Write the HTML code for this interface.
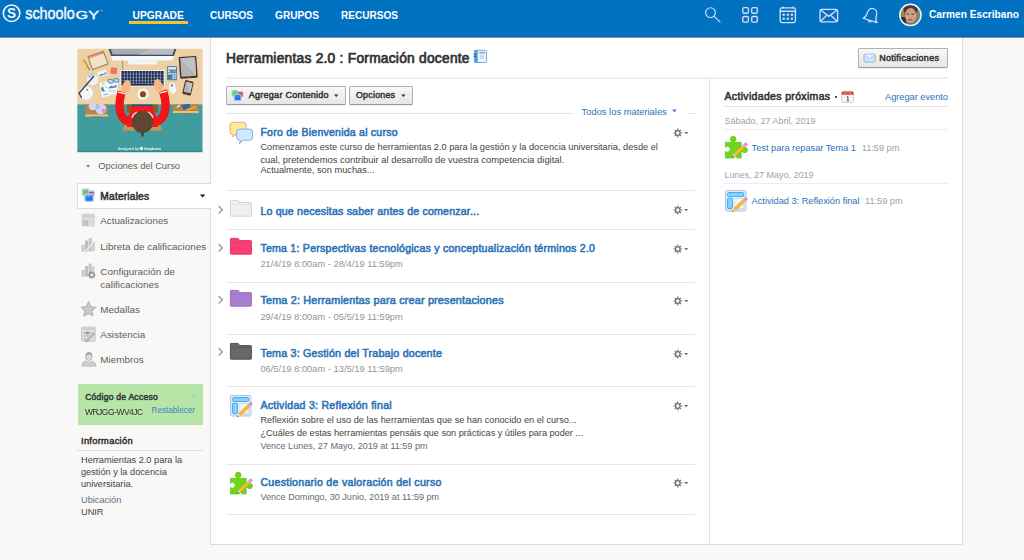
<!DOCTYPE html>
<html lang="es">
<head>
<meta charset="utf-8">
<title>Herramientas 2.0 : Formación docente | Schoology</title>
<style>
*{box-sizing:border-box;margin:0;padding:0}
html,body{width:1024px;height:560px;overflow:hidden}
body{background:#f9f8f6;font-family:"Liberation Sans",sans-serif;color:#333;position:relative;font-size:9px}
.abs{position:absolute}
.t{position:absolute;white-space:nowrap;line-height:1}
svg{position:absolute;overflow:visible}

</style>
</head>
<body>
<div class="abs" style="left:0px;top:0px;width:1024px;height:37px;background:linear-gradient(#0172c2 0,#0172c2 34.5px,#0968b7 35px,#0968b7 37px);box-shadow:0 0 1px 0 rgba(40,40,60,.8)"></div>
<div class="t" style="left:132.6px;top:11px;font-size:10.24px;font-weight:bold;color:#fff;">UPGRADE</div>
<div class="abs" style="left:129px;top:21px;width:58.5px;height:2.5px;background:#f6c32b;"></div>
<div class="t" style="left:210.0px;top:11px;font-size:10.05px;font-weight:bold;color:#fff;">CURSOS</div>
<div class="t" style="left:275.0px;top:11px;font-size:10.15px;font-weight:bold;color:#fff;">GRUPOS</div>
<div class="t" style="left:341.0px;top:11px;font-size:10.06px;font-weight:bold;color:#fff;">RECURSOS</div>
<div class="t" style="left:929.0px;top:10px;font-size:10.18px;font-weight:bold;color:#fff;">Carmen Escribano</div>
<svg style="left:0;top:0" width="110" height="37" viewBox="0 0 110 37">
<circle cx="11.55" cy="13.2" r="8.25" fill="none" stroke="#f2f5fc" stroke-width="1.6"/>
<text x="7.1" y="18.2" font-family="Liberation Sans" font-weight="bold" font-size="14" fill="#f2f5fc" textLength="9" lengthAdjust="spacingAndGlyphs">S</text>
<text x="25.2" y="18.6" font-family="Liberation Sans" font-size="16.6" fill="#f4f6fc" stroke="#f4f6fc" stroke-width="0.45" textLength="49.6" lengthAdjust="spacingAndGlyphs">schoolo</text>
<text x="75.6" y="18.6" font-family="Liberation Sans" font-size="11.8" fill="#f4f6fc" stroke="#f4f6fc" stroke-width="0.4" textLength="23.4" lengthAdjust="spacingAndGlyphs">GY</text>
<text x="100" y="11.5" font-family="Liberation Sans" font-size="3" fill="#dfe8f8">™</text>
</svg>
<svg style="left:700px;top:0" width="240" height="37" viewBox="700 0 240 37" fill="none" stroke="#d6dcf4" stroke-width="1.35" stroke-linecap="round" stroke-linejoin="round">
<g stroke-width="1.15"><circle cx="710.5" cy="12.6" r="4.9"/><path d="M714.2 16.3L720 21.8"/></g>
<rect x="742.8" y="7.6" width="5.6" height="5.6" rx="1.3"/><rect x="751.7" y="7.6" width="5.6" height="5.6" rx="1.3"/>
<rect x="742.8" y="16.5" width="5.6" height="5.6" rx="1.3"/><rect x="751.7" y="16.5" width="5.6" height="5.6" rx="1.3"/>
<rect x="780.2" y="7.8" width="15.2" height="14.8" rx="1.8"/><path d="M780.2 11.2H795.4"/>
<g stroke="none" fill="#d6dcf4"><circle cx="783.2" cy="7.6" r="1"/><circle cx="792.6" cy="7.6" r="1"/>
<rect x="782.6" y="13.6" width="2.2" height="2.2"/><rect x="786.7" y="13.6" width="2.2" height="2.2"/><rect x="790.8" y="13.6" width="2.2" height="2.2"/>
<rect x="782.6" y="17.6" width="2.2" height="2.2"/><rect x="786.7" y="17.6" width="2.2" height="2.2"/><rect x="790.8" y="17.6" width="2.2" height="2.2"/></g>
<rect x="820" y="9.4" width="17.6" height="12.4" rx="1.6"/><path d="M820.6 10L828.8 16.4L837 10M820.6 21.2L827 15M837 21.2L830.6 15"/>
<g transform="translate(1.4 0.8) rotate(17 870 15)" stroke-width="1.2"><path d="M862.6 19.8C865.3 18.6 865 16.5 865.2 13.5C865.4 9.8 867.4 7.6 870 7.6C872.6 7.6 874.6 9.8 874.8 13.5C875 16.5 874.7 18.6 877.4 19.8Z"/><path d="M868.4 20.2a1.7 1.7 0 0 0 3.2 0"/></g>
</svg>
<svg style="left:896px;top:0" width="30" height="32" viewBox="896 0 30 32">
<defs><clipPath id="av"><circle cx="910.4" cy="14.95" r="10.2"/></clipPath><filter id="bl"><feGaussianBlur stdDeviation="0.6"/></filter></defs>
<g clip-path="url(#av)"><g filter="url(#bl)">
<rect x="896" y="0" width="30" height="32" fill="#7f7a55"/>
<rect x="915" y="0" width="12" height="32" fill="#7c8470"/>
<rect x="899" y="3" width="5" height="14" fill="#9a8a3c"/>
<rect x="899" y="17" width="7" height="10" fill="#2f3440"/>
<ellipse cx="910.5" cy="9.5" rx="7" ry="5.5" fill="#4a3731"/>
<ellipse cx="910.6" cy="15.5" rx="5.6" ry="7.4" fill="#cfa08a"/>
<ellipse cx="910.3" cy="19.7" rx="2.4" ry="1" fill="#c0584a"/>
<rect x="906.5" y="13.6" width="2.6" height="1.2" fill="#6a4a40"/><rect x="911.5" y="13.6" width="2.6" height="1.2" fill="#6a4a40"/>
<path d="M900 27Q910 20 921 27Z" fill="#4a6a72"/>
</g></g>
<circle cx="910.4" cy="14.95" r="10.6" fill="none" stroke="#f4f6fb" stroke-width="1.5"/>
</svg>
<div class="abs" style="left:210px;top:37px;width:753px;height:508px;background:#fff;border:1px solid #dcdcdc;border-top:none"></div>
<div class="abs" style="left:0px;top:37px;width:1024px;height:1px;background:rgba(95,115,145,.75);"></div>
<div class="abs" style="left:77px;top:183px;width:134px;height:26px;background:#fff;border:1px solid #dcdcdc;border-right:none"></div>
<div class="t" style="left:226.0px;top:52px;font-size:13.76px;color:#333;letter-spacing:0.254px;-webkit-text-stroke:0.72px #333;">Herramientas 2.0 : Formación docente</div>
<div class="abs" style="left:226px;top:76.8px;width:722px;height:2px;background:#efefef;"></div>
<div class="abs" style="left:226px;top:85.5px;width:120px;height:19.5px;background:linear-gradient(#f8f8f8,#e6e6e6);border:1px solid #b0b0b0;border-bottom-color:#9a9a9a;border-radius:1.5px;box-shadow:0 .5px .5px rgba(0,0,0,.12)"></div>
<div class="abs" style="left:349px;top:85.5px;width:64px;height:19.5px;background:linear-gradient(#f8f8f8,#e6e6e6);border:1px solid #b0b0b0;border-bottom-color:#9a9a9a;border-radius:1.5px;box-shadow:0 .5px .5px rgba(0,0,0,.12)"></div>
<div class="abs" style="left:858px;top:48.2px;width:90px;height:19.5px;background:linear-gradient(#f8f8f8,#e6e6e6);border:1px solid #b0b0b0;border-bottom-color:#9a9a9a;border-radius:1.5px;box-shadow:0 .5px .5px rgba(0,0,0,.12)"></div>
<div class="t" style="left:248.8px;top:91px;font-size:9.05px;color:#333;letter-spacing:0.235px;-webkit-text-stroke:0.47px #333;">Agregar Contenido</div>
<div class="t" style="left:356.0px;top:91px;font-size:8.84px;color:#333;letter-spacing:0.244px;-webkit-text-stroke:0.46px #333;">Opciones</div>
<div class="t" style="left:879.2px;top:54px;font-size:9.00px;color:#333;letter-spacing:0.285px;-webkit-text-stroke:0.47px #333;">Notificaciones</div>
<svg style="left:472px;top:48px" width="18" height="18" viewBox="472 48 18 18"><g filter="url(#b3)">
<rect x="474.4" y="50.3" width="12.2" height="12.2" rx=".8" fill="#d9ecff" stroke="#6ea8e6" stroke-width=".9"/>
<rect x="474.4" y="50.3" width="3.2" height="12.2" fill="#4d93e2"/>
<rect x="478.6" y="51.6" width="7" height="9.8" fill="#f2f8ff"/>
<rect x="479.2" y="52.2" width="5.8" height="1.3" fill="#5aa0ea"/>
<rect x="479.9" y="54.8" width="4.2" height="4.2" fill="#d8d8d8"/>
<path d="M473.6 54.2h2.2M473.6 56.4h2.2" stroke="#3a4a66" stroke-width=".8"/>
<path d="M473.6 52.2h2M473.6 58.6h2M473.6 60.6h2" stroke="#8fbdf0" stroke-width=".7"/>
</g></svg>
<svg style="left:230px;top:88px" width="16" height="16" viewBox="230 88 16 16"><g filter="url(#b3)">
<rect x="232" y="90.4" width="5.8" height="5.6" rx="1" fill="url(#gG)" stroke="#a9c7ee" stroke-width="1"/>
<rect x="237.6" y="91.8" width="5.4" height="5.2" rx="1" fill="url(#gR)" stroke="#a9c7ee" stroke-width="1"/>
<rect x="234.2" y="94.4" width="6.8" height="6.2" rx="1.2" fill="url(#gB)" stroke="#a9c7ee" stroke-width="1.1"/>
</g></svg>
<svg style="left:332px;top:92px" width="80" height="8" viewBox="332 92 80 8"><path d="M334 94.5h4.4l-2.2 2.6Z M401.2 94.5h4.4l-2.2 2.6Z" fill="#333"/></svg>
<svg style="left:862px;top:52px" width="16" height="12" viewBox="862 52 16 12"><g filter="url(#b3)">
<rect x="864" y="54.2" width="11.2" height="7.8" rx=".8" fill="#d9e9fb" stroke="#86aee6" stroke-width=".9"/>
<path d="M864.4 54.8L869.6 59L874.8 54.8" fill="#eef5fe" stroke="#9dbdec" stroke-width=".8"/>
<path d="M864.4 61.6L868.2 58M874.8 61.6L871 58" stroke="#b4cdf0" stroke-width=".6"/>
</g></svg>
<svg style="left:839px;top:89px" width="18" height="16" viewBox="839 89 18 16"><g filter="url(#b3)">
<rect x="841.8" y="92" width="11.6" height="10.4" rx="1" fill="#fafafa" stroke="#c4c8cc" stroke-width=".9"/>
<path d="M841.6 92.6Q841.6 91.4 842.8 91.4H852.4Q853.6 91.4 853.6 92.6V94.8H841.6Z" fill="#f1482a"/>
<rect x="844.2" y="90.6" width="1.7" height="3" rx=".5" fill="#8fa4b8"/><rect x="849.3" y="90.6" width="1.7" height="3" rx=".5" fill="#8fa4b8"/>
<path d="M846.8 97.2L847.9 96.4V100.6M846.9 100.7H849" stroke="#444" stroke-width=".9" fill="none"/>
<path d="M844.6 95.4V102M850.8 95.4V102" stroke="#e6e6e6" stroke-width=".5"/>
</g></svg>
<div class="abs" style="left:226px;top:113px;width:347px;height:1px;background:#e3e3e3;"></div>
<div class="abs" style="left:687px;top:113px;width:8px;height:1px;background:#e3e3e3;"></div>
<div class="t" style="left:581.6px;top:108px;font-size:9.35px;color:#2b73b7;">Todos los materiales</div>
<div class="abs" style="left:226px;top:190px;width:469px;height:1px;background:#e6e6e6;"></div>
<div class="abs" style="left:226px;top:229px;width:469px;height:1px;background:#e6e6e6;"></div>
<div class="abs" style="left:226px;top:282px;width:469px;height:1px;background:#e6e6e6;"></div>
<div class="abs" style="left:226px;top:334px;width:469px;height:1px;background:#e6e6e6;"></div>
<div class="abs" style="left:226px;top:386px;width:469px;height:1px;background:#e6e6e6;"></div>
<div class="abs" style="left:226px;top:464px;width:469px;height:1px;background:#e6e6e6;"></div>
<div class="abs" style="left:226px;top:514px;width:469px;height:1px;background:#e6e6e6;"></div>
<div class="abs" style="left:709px;top:78px;width:1px;height:467px;background:#e3e3e3;"></div>
<div class="t" style="left:260.4px;top:127px;font-size:10.52px;color:#2b73b7;letter-spacing:0.239px;-webkit-text-stroke:0.55px #2b73b7;">Foro de Bienvenida al curso</div>
<div class="t" style="left:260.4px;top:143px;font-size:9.21px;color:#444;">Comenzamos este curso de herramientas 2.0 para la gestión y la docencia universitaria, desde el</div>
<div class="t" style="left:260.4px;top:155px;font-size:9.39px;color:#444;">cual, pretendemos contribuir al desarrollo de vuestra competencia digital.</div>
<div class="t" style="left:260.4px;top:166px;font-size:9.25px;color:#444;">Actualmente, son muchas...</div>
<div class="t" style="left:260.4px;top:206px;font-size:10.63px;color:#2b73b7;letter-spacing:0.174px;-webkit-text-stroke:0.55px #2b73b7;">Lo que necesitas saber antes de comenzar...</div>
<div class="t" style="left:260.4px;top:243px;font-size:10.57px;color:#2b73b7;letter-spacing:0.243px;-webkit-text-stroke:0.55px #2b73b7;">Tema 1: Perspectivas tecnológicas y conceptualización términos 2.0</div>
<div class="t" style="left:260.4px;top:260px;font-size:9.33px;color:#959595;">21/4/19 8:00am - 28/4/19 11:59pm</div>
<div class="t" style="left:260.4px;top:295px;font-size:10.81px;color:#2b73b7;letter-spacing:0.190px;-webkit-text-stroke:0.56px #2b73b7;">Tema 2: Herramientas para crear presentaciones</div>
<div class="t" style="left:260.4px;top:313px;font-size:9.33px;color:#959595;">29/4/19 8:00am - 05/5/19 11:59pm</div>
<div class="t" style="left:260.4px;top:348px;font-size:10.73px;color:#2b73b7;letter-spacing:0.186px;-webkit-text-stroke:0.56px #2b73b7;">Tema 3: Gestión del Trabajo docente</div>
<div class="t" style="left:260.4px;top:365px;font-size:9.33px;color:#959595;">06/5/19 8:00am - 13/5/19 11:59pm</div>
<div class="t" style="left:260.4px;top:400px;font-size:10.55px;color:#2b73b7;letter-spacing:0.279px;-webkit-text-stroke:0.55px #2b73b7;">Actividad 3: Reflexión final</div>
<div class="t" style="left:260.4px;top:416px;font-size:9.19px;color:#444;">Reflexión sobre el uso de las herramientas que se han conocido en el curso...</div>
<div class="t" style="left:260.4px;top:429px;font-size:9.14px;color:#444;">¿Cuáles de estas herramientas pensáis que son prácticas y útiles para poder ...</div>
<div class="t" style="left:260.4px;top:442px;font-size:9.07px;color:#5f6b7a;">Vence Lunes, 27 Mayo, 2019 at 11:59 pm</div>
<div class="t" style="left:260.4px;top:477px;font-size:10.58px;color:#2b73b7;letter-spacing:0.281px;-webkit-text-stroke:0.55px #2b73b7;">Cuestionario de valoración del curso</div>
<div class="t" style="left:260.4px;top:493px;font-size:9.10px;color:#5f6b7a;">Vence Domingo, 30 Junio, 2019 at 11:59 pm</div>
<svg style="left:226px;top:118px" width="32" height="30" viewBox="226 118 32 30"><g filter="url(#b3)">
<path d="M233 122.3H243.2Q246.2 122.3 246.2 125.3V131.8Q246.2 134.8 243.2 134.8H236L232.6 137L233.6 134.8H233Q230 134.8 230 131.8V125.3Q230 122.3 233 122.3Z" fill="#fde8a0" stroke="#f7a479" stroke-width="1"/>
<path d="M239.6 129.1H249.6Q252.6 129.1 252.6 132.1V137.2Q252.6 140.2 249.6 140.2H243.4L239.2 143.8L240.6 140.2H239.6Q236.6 140.2 236.6 137.2V132.1Q236.6 129.1 239.6 129.1Z" fill="#cfeaff" stroke="#7db1ea" stroke-width="1"/>
</g></svg>
<svg style="left:228px;top:198px" width="26" height="22" viewBox="228 198 26 22"><g filter="url(#b3)">
<path d="M230.4 201Q230.4 200.4 231 200.4H237.8Q238.4 200.4 238.7 201L239.5 202.6H250.8Q251.4 202.6 251.4 203.2V215.6Q251.4 216.2 250.8 216.2H231Q230.4 216.2 230.4 215.6Z" fill="#f0f0f0" stroke="#cfcfcf" stroke-width=".9"/>
<path d="M230.8 204.6H251" stroke="#dedede" stroke-width=".8"/></g></svg>
<svg style="left:216px;top:203.7px" width="10" height="12" viewBox="216 203.7 10 12"><path d="M218.6 205.7L222.4 209.5L218.6 213.29999999999998" fill="none" stroke="#959595" stroke-width="1.3"/></svg>
<svg style="left:228px;top:236px" width="26" height="22" viewBox="228 236 26 22"><g filter="url(#b3)">
<path d="M230.4 239Q230.4 238.4 231 238.4H237.8Q238.4 238.4 238.7 239L239.5 240.6H250.8Q251.4 240.6 251.4 241.2V253.6Q251.4 254.2 250.8 254.2H231Q230.4 254.2 230.4 253.6Z" fill="#fb3c75" stroke="#e02e62" stroke-width=".9"/>
<path d="M230.8 242.6H251" stroke="#e93769" stroke-width=".8"/></g></svg>
<svg style="left:216px;top:241.5px" width="10" height="12" viewBox="216 241.5 10 12"><path d="M218.6 243.5L222.4 247.3L218.6 251.1" fill="none" stroke="#959595" stroke-width="1.3"/></svg>
<svg style="left:228px;top:288px" width="26" height="22" viewBox="228 288 26 22"><g filter="url(#b3)">
<path d="M230.4 291Q230.4 290.4 231 290.4H237.8Q238.4 290.4 238.7 291L239.5 292.6H250.8Q251.4 292.6 251.4 293.2V305.6Q251.4 306.2 250.8 306.2H231Q230.4 306.2 230.4 305.6Z" fill="#aa80cd" stroke="#9566be" stroke-width=".9"/>
<path d="M230.8 294.6H251" stroke="#9c6fc4" stroke-width=".8"/></g></svg>
<svg style="left:216px;top:294px" width="10" height="12" viewBox="216 294 10 12"><path d="M218.6 296L222.4 299.8L218.6 303.6" fill="none" stroke="#959595" stroke-width="1.3"/></svg>
<svg style="left:228px;top:340.6px" width="26" height="22" viewBox="228 340.6 26 22"><g filter="url(#b3)">
<path d="M230.4 343.6Q230.4 343.0 231 343.0H237.8Q238.4 343.0 238.7 343.6L239.5 345.20000000000005H250.8Q251.4 345.20000000000005 251.4 345.8V358.20000000000005Q251.4 358.8 250.8 358.8H231Q230.4 358.8 230.4 358.20000000000005Z" fill="#676767" stroke="#484848" stroke-width=".9"/>
<path d="M230.8 347.20000000000005H251" stroke="#555" stroke-width=".8"/></g></svg>
<svg style="left:216px;top:346.3px" width="10" height="12" viewBox="216 346.3 10 12"><path d="M218.6 348.3L222.4 352.1L218.6 355.90000000000003" fill="none" stroke="#959595" stroke-width="1.3"/></svg>
<svg style="left:226px;top:391px" width="32" height="32" viewBox="226 391 32 32"><g filter="url(#b3)">
<rect x="230.5" y="395.5" width="20.4" height="20.4" rx="1.6" fill="#fff" stroke="#a4c8f0" stroke-width="1.1"/>
<rect x="231.8" y="396.8" width="17.8" height="17.8" fill="none" stroke="#d8d8d8" stroke-width=".7"/>
<rect x="232.6" y="397.6" width="16" height="4" rx=".8" fill="#8ad2ff" stroke="#33a3f5" stroke-width=".95"/>
<rect x="232.6" y="403.2" width="4.8" height="10.2" rx=".6" fill="#8ad2ff" stroke="#33a3f5" stroke-width=".95"/>
<rect x="239" y="403.2" width="9.8" height="10.2" fill="#f3f3f3" stroke="#cfcfcf" stroke-width=".8"/>
<g transform="translate(237.1 417) rotate(-43.8)">
<path d="M0 0L3.4 -1.7V1.7Z" fill="#f1d9b0"/><path d="M0 0L1.4 -0.71V0.71Z" fill="#3a3a3a"/>
<rect x="3.4" y="-1.7" width="12.51" height="3.4" fill="#f7a928"/><rect x="3.4" y="-0.59" width="12.51" height="1.19" fill="#fcc04a"/>
<rect x="15.91" y="-1.7" width="1.8" height="3.4" fill="#b9b9b9"/>
<rect x="17.71" y="-1.7" width="2.8" height="3.4" rx=".9" fill="#ea86d0"/></g>
</g></svg>
<svg style="left:226px;top:468px" width="32" height="32" viewBox="226 468 32 32"><g filter="url(#b3)">
<g fill="#6fd51f" stroke="#5cc21a" stroke-width=".7">
<circle cx="249.7" cy="486" r="2.7"/><circle cx="238.2" cy="475" r="2.8"/>
<path d="M230.4 478.3H246.2V494H242.1A1.5 1.5 0 0 0 239.1 494H230.4V487.3A2.8 2.8 0 1 0 230.4 483.3Z"/></g>
<rect x="236.7" y="476.6" width="3" height="2.6" fill="#6fd51f"/><rect x="245.4" y="484.2" width="2.6" height="3.6" fill="#6fd51f"/>
<g transform="translate(237.1 493.3) rotate(-43.4)">
<path d="M0 0L3.4 -1.7V1.7Z" fill="#f1d9b0"/><path d="M0 0L1.4 -0.71V0.71Z" fill="#3a3a3a"/>
<rect x="3.4" y="-1.7" width="12.37" height="3.4" fill="#f7a928"/><rect x="3.4" y="-0.59" width="12.37" height="1.19" fill="#fcc04a"/>
<rect x="15.77" y="-1.7" width="1.8" height="3.4" fill="#b9b9b9"/>
<rect x="17.57" y="-1.7" width="2.8" height="3.4" rx=".9" fill="#ea86d0"/></g>
</g></svg>
<svg style="left:720.6px;top:132.1px" width="32" height="32" viewBox="226 468 32 32"><g filter="url(#b3)">
<g fill="#6fd51f" stroke="#5cc21a" stroke-width=".7">
<circle cx="249.7" cy="486" r="2.7"/><circle cx="238.2" cy="475" r="2.8"/>
<path d="M230.4 478.3H246.2V494H242.1A1.5 1.5 0 0 0 239.1 494H230.4V487.3A2.8 2.8 0 1 0 230.4 483.3Z"/></g>
<rect x="236.7" y="476.6" width="3" height="2.6" fill="#6fd51f"/><rect x="245.4" y="484.2" width="2.6" height="3.6" fill="#6fd51f"/>
<g transform="translate(237.1 493.3) rotate(-43.4)">
<path d="M0 0L3.4 -1.7V1.7Z" fill="#f1d9b0"/><path d="M0 0L1.4 -0.71V0.71Z" fill="#3a3a3a"/>
<rect x="3.4" y="-1.7" width="12.37" height="3.4" fill="#f7a928"/><rect x="3.4" y="-0.59" width="12.37" height="1.19" fill="#fcc04a"/>
<rect x="15.77" y="-1.7" width="1.8" height="3.4" fill="#b9b9b9"/>
<rect x="17.57" y="-1.7" width="2.8" height="3.4" rx=".9" fill="#ea86d0"/></g>
</g></svg>
<svg style="left:720.8px;top:186.2px" width="32" height="32" viewBox="226 391 32 32"><g filter="url(#b3)">
<rect x="230.5" y="395.5" width="20.4" height="20.4" rx="1.6" fill="#fff" stroke="#a4c8f0" stroke-width="1.1"/>
<rect x="231.8" y="396.8" width="17.8" height="17.8" fill="none" stroke="#d8d8d8" stroke-width=".7"/>
<rect x="232.6" y="397.6" width="16" height="4" rx=".8" fill="#8ad2ff" stroke="#33a3f5" stroke-width=".95"/>
<rect x="232.6" y="403.2" width="4.8" height="10.2" rx=".6" fill="#8ad2ff" stroke="#33a3f5" stroke-width=".95"/>
<rect x="239" y="403.2" width="9.8" height="10.2" fill="#f3f3f3" stroke="#cfcfcf" stroke-width=".8"/>
<g transform="translate(237.1 417) rotate(-43.8)">
<path d="M0 0L3.4 -1.7V1.7Z" fill="#f1d9b0"/><path d="M0 0L1.4 -0.71V0.71Z" fill="#3a3a3a"/>
<rect x="3.4" y="-1.7" width="12.51" height="3.4" fill="#f7a928"/><rect x="3.4" y="-0.59" width="12.51" height="1.19" fill="#fcc04a"/>
<rect x="15.91" y="-1.7" width="1.8" height="3.4" fill="#b9b9b9"/>
<rect x="17.71" y="-1.7" width="2.8" height="3.4" rx=".9" fill="#ea86d0"/></g>
</g></svg>
<svg style="left:670px;top:126.9px" width="22" height="12" viewBox="670 126.9 22 12">
<circle cx="677.8" cy="132.9" r="2.3" fill="none" stroke="#6a6a6a" stroke-width="1.3"/>
<g stroke="#6a6a6a" stroke-width="1.15"><path d="M677.8 128.5V129.9M677.8 135.9V137.3M673.4 132.9H674.8M680.8 132.9H682.2M674.7 129.8L675.7 130.8M679.9 135.0L680.9 136.0M674.7 136.0L675.7 135.0M679.9 130.8L680.9 129.8"/></g>
<path d="M684.2 131.9h4l-2 2.3Z" fill="#6a6a6a"/></svg>
<svg style="left:670px;top:203.8px" width="22" height="12" viewBox="670 203.8 22 12">
<circle cx="677.8" cy="209.8" r="2.3" fill="none" stroke="#6a6a6a" stroke-width="1.3"/>
<g stroke="#6a6a6a" stroke-width="1.15"><path d="M677.8 205.4V206.8M677.8 212.8V214.20000000000002M673.4 209.8H674.8M680.8 209.8H682.2M674.7 206.70000000000002L675.7 207.70000000000002M679.9 211.9L680.9 212.9M674.7 212.9L675.7 211.9M679.9 207.70000000000002L680.9 206.70000000000002"/></g>
<path d="M684.2 208.8h4l-2 2.3Z" fill="#6a6a6a"/></svg>
<svg style="left:670px;top:243.0px" width="22" height="12" viewBox="670 243.0 22 12">
<circle cx="677.8" cy="249.0" r="2.3" fill="none" stroke="#6a6a6a" stroke-width="1.3"/>
<g stroke="#6a6a6a" stroke-width="1.15"><path d="M677.8 244.6V246.0M677.8 252.0V253.4M673.4 249.0H674.8M680.8 249.0H682.2M674.7 245.9L675.7 246.9M679.9 251.1L680.9 252.1M674.7 252.1L675.7 251.1M679.9 246.9L680.9 245.9"/></g>
<path d="M684.2 248.0h4l-2 2.3Z" fill="#6a6a6a"/></svg>
<svg style="left:670px;top:295.2px" width="22" height="12" viewBox="670 295.2 22 12">
<circle cx="677.8" cy="301.2" r="2.3" fill="none" stroke="#6a6a6a" stroke-width="1.3"/>
<g stroke="#6a6a6a" stroke-width="1.15"><path d="M677.8 296.8V298.2M677.8 304.2V305.59999999999997M673.4 301.2H674.8M680.8 301.2H682.2M674.7 298.09999999999997L675.7 299.09999999999997M679.9 303.3L680.9 304.3M674.7 304.3L675.7 303.3M679.9 299.09999999999997L680.9 298.09999999999997"/></g>
<path d="M684.2 300.2h4l-2 2.3Z" fill="#6a6a6a"/></svg>
<svg style="left:670px;top:347.6px" width="22" height="12" viewBox="670 347.6 22 12">
<circle cx="677.8" cy="353.6" r="2.3" fill="none" stroke="#6a6a6a" stroke-width="1.3"/>
<g stroke="#6a6a6a" stroke-width="1.15"><path d="M677.8 349.20000000000005V350.6M677.8 356.6V358.0M673.4 353.6H674.8M680.8 353.6H682.2M674.7 350.5L675.7 351.5M679.9 355.70000000000005L680.9 356.70000000000005M674.7 356.70000000000005L675.7 355.70000000000005M679.9 351.5L680.9 350.5"/></g>
<path d="M684.2 352.6h4l-2 2.3Z" fill="#6a6a6a"/></svg>
<svg style="left:670px;top:400.3px" width="22" height="12" viewBox="670 400.3 22 12">
<circle cx="677.8" cy="406.3" r="2.3" fill="none" stroke="#6a6a6a" stroke-width="1.3"/>
<g stroke="#6a6a6a" stroke-width="1.15"><path d="M677.8 401.90000000000003V403.3M677.8 409.3V410.7M673.4 406.3H674.8M680.8 406.3H682.2M674.7 403.2L675.7 404.2M679.9 408.40000000000003L680.9 409.40000000000003M674.7 409.40000000000003L675.7 408.40000000000003M679.9 404.2L680.9 403.2"/></g>
<path d="M684.2 405.3h4l-2 2.3Z" fill="#6a6a6a"/></svg>
<svg style="left:670px;top:476.7px" width="22" height="12" viewBox="670 476.7 22 12">
<circle cx="677.8" cy="482.7" r="2.3" fill="none" stroke="#6a6a6a" stroke-width="1.3"/>
<g stroke="#6a6a6a" stroke-width="1.15"><path d="M677.8 478.3V479.7M677.8 485.7V487.09999999999997M673.4 482.7H674.8M680.8 482.7H682.2M674.7 479.59999999999997L675.7 480.59999999999997M679.9 484.8L680.9 485.8M674.7 485.8L675.7 484.8M679.9 480.59999999999997L680.9 479.59999999999997"/></g>
<path d="M684.2 481.7h4l-2 2.3Z" fill="#6a6a6a"/></svg>
<svg style="left:670px;top:108px" width="10" height="6" viewBox="670 108 10 6"><path d="M672.2 109.6h4.6l-2.3 2.7Z" fill="#3a80c8"/></svg>
<div class="t" style="left:724.5px;top:91px;font-size:10.51px;color:#333;letter-spacing:0.335px;-webkit-text-stroke:0.55px #333;">Actividades próximas</div>
<div class="abs" style="left:835.4px;top:96.4px;width:1.5px;height:1.5px;background:#555;"></div>
<div class="t" style="left:885.0px;top:93px;font-size:9.21px;color:#2b73b7;">Agregar evento</div>
<div class="abs" style="left:724px;top:106px;width:224px;height:1px;background:#e3e3e3;"></div>
<div class="t" style="left:724.5px;top:117px;font-size:8.99px;color:#9aa1ac;">Sábado, 27 Abril, 2019</div>
<div class="abs" style="left:724px;top:129px;width:224px;height:1px;background:#ececec;"></div>
<div class="t" style="left:751.6px;top:144px;font-size:9.23px;color:#2b73b7;">Test para repasar Tema 1</div>
<div class="t" style="left:861.8px;top:144px;font-size:9.18px;color:#9aa1ac;">11:59 pm</div>
<div class="t" style="left:724.5px;top:171px;font-size:9.00px;color:#9aa1ac;">Lunes, 27 Mayo, 2019</div>
<div class="abs" style="left:724px;top:183px;width:224px;height:1px;background:#ececec;"></div>
<div class="t" style="left:751.6px;top:197px;font-size:9.21px;color:#2b73b7;">Actividad 3: Reflexión final</div>
<div class="t" style="left:865.0px;top:197px;font-size:9.18px;color:#9aa1ac;">11:59 pm</div>
<svg style="left:70px;top:40px" width="140" height="120" viewBox="70 40 140 120">
<defs><clipPath id="ci"><rect x="77.3" y="48.8" width="125.2" height="103.5"/></clipPath><filter id="b2" x="-5%" y="-5%" width="110%" height="110%"><feGaussianBlur stdDeviation="0.35"/></filter></defs>
<g clip-path="url(#ci)"><g filter="url(#b2)">
<rect x="70" y="40" width="140" height="66" fill="#edd1a5"/>
<rect x="70" y="104.4" width="140" height="50" fill="#3f9c9e"/>
<rect x="77.3" y="150.8" width="125.2" height="1.5" fill="#2f8a8e"/>
<!-- drawers -->
<rect x="85.3" y="104.4" width="22.7" height="11" fill="#b4874a"/><rect x="85.3" y="114.4" width="22.7" height="2.2" fill="#e3c08d"/><rect x="93" y="116.6" width="7" height="1.3" fill="#9a7440"/>
<circle cx="92.8" cy="106.2" r="4" fill="#d9d4ee"/><circle cx="100.8" cy="108.9" r="5.4" fill="#cfd4f2"/><circle cx="100.8" cy="108.9" r="3.4" fill="#e5c8f0"/><circle cx="100.8" cy="108.9" r="1.3" fill="#f4f4fa"/><path d="M95.6 108.9a5.2 5.2 0 0 1 3-4.6l2.2 4.6Z" fill="#9fc4f0"/><path d="M106 108.9a5.2 5.2 0 0 1-3 4.6l-2.2-4.6Z" fill="#b9a2ea"/>
<rect x="173" y="104.4" width="25.7" height="7.5" fill="#b4874a"/><rect x="173" y="111" width="25.7" height="2.1" fill="#e3c08d"/><rect x="182" y="113.1" width="8" height="1.3" fill="#9a7440"/>
<path d="M181.5 105l8-1.2 1.2 3.8-7 2.4Z" fill="#2f66b0"/><path d="M186 109.2l9.5-3.6 1 2.4-9.5 3Z" fill="#f2a024"/><path d="M176.5 106.5l2.8-2 .9 1.2-2.7 2.3Z" fill="#e8e8e8"/>
<!-- monitor -->
<path d="M108.5 48.8H176.5L173.8 56H111.2Z" fill="#3c5066"/>
<path d="M110.6 48.8H174.4L172.4 54.4H112.6Z" fill="#a9abae"/>
<path d="M150 48.8H174.4L172.4 54.4H138Z" fill="#b9bbbe"/>
<path d="M111.2 56H173.8L173 59.8Q172.6 60.4 171.6 60.4H113.4Q112.4 60.4 112 59.8Z" fill="#f7f8f9"/>
<path d="M128 60.4H157V62.6Q157 64.6 154.4 64.6H130.6Q128 64.6 128 62.6Z" fill="#f3f4f6"/>
<rect x="122.2" y="60.6" width="0.9" height="9" fill="#8f8a80"/>
<!-- notepad + pencils -->
<path d="M81.2 60.4l.9-.4 5.6 10.4-.9.5Z" fill="#f3d13a"/><path d="M83.2 59.6l.9-.4 6 10.6-1 .5Z" fill="#a8763e"/>
<path d="M87.4 56.2L103.6 50.8L108.8 64.2L92.2 70.2Z" fill="#9b7850"/>
<path d="M88.6 57L103 52.2L107.6 63.6L92.8 69Z" fill="#efe3c6"/>
<path d="M88.6 57L103 52.2L103.6 53.6L89.2 58.5Z" fill="#ec8a78"/>
<!-- sticky -->
<path d="M111.4 67L117.4 68.2L116.4 74.4L110.2 73.2Z" fill="#f2716c"/>
<!-- lamp -->
<circle cx="92.3" cy="79.6" r="5.8" fill="#f1f0ee"/><ellipse cx="91.2" cy="75.2" rx="3.6" ry="2.4" fill="#c9cbcd" transform="rotate(-35 91.2 75.2)"/>
<circle cx="86.2" cy="93.4" r="7.4" fill="#cfe3ea"/><circle cx="86.2" cy="93" r="6.6" fill="#f7f8f8"/><circle cx="87.4" cy="89.8" r="1" fill="#5f93b8"/>
<path d="M93.6 76.6L79 93.2L81.4 97.4" fill="none" stroke="#3b4f62" stroke-width="1.5" stroke-linejoin="round" stroke-linecap="round"/>
<!-- cards & papers -->
<path d="M97.2 72.6L105.8 69.6L107.4 74.4L98.8 77.4Z" fill="#f6f7f8"/><path d="M99 75.8L101.6 73.6L103.4 74.2L106 71.8L106.6 73.8L99.4 76.6Z" fill="#3f8fd0"/>
<path d="M99.4 83L108 81L110.6 95.6L102 97.6Z" fill="#f6f7f8"/><path d="M103.2 86.4a2.6 2.6 0 1 0 1.8 4.8l-1.4-2.2Z" fill="#2f94c8"/><rect x="101.8" y="82.8" width="3" height="2.2" fill="#d4d6d8" transform="rotate(-12 103 84)"/><path d="M103.4 94.2l5.4-1.2.3 1.4-5.4 1.2Z" fill="#7cc0e4"/><circle cx="106.2" cy="87" r=".8" fill="#f2a63c"/>
<path d="M107.8 81.6L118 83L116.8 94.8L106.4 93.4Z" fill="#fafafb"/><path d="M108.8 87.4L111.4 85.6L113.2 86.6L116.6 84.6L116.4 87.4L108.8 88.6Z" fill="#3f8fd0"/><rect x="108.6" y="89.6" width="3" height="2.6" fill="#d9dadc"/><rect x="112.4" y="90" width="3.2" height="2.6" fill="#d9dadc"/>
<path d="M108 80.4Q108 79 109.6 79.2L112.4 79.8Q113.4 80 113.2 81.2L113 82.6Q112.8 83.6 111.6 83.4L109 82.8Q107.8 82.6 108 81.4Z" fill="#bcd8ee" stroke="#3a6ea6" stroke-width=".8"/>
<path d="M113.8 79.4Q114 78.2 115.4 78.4L117.8 78.8Q118.8 79 118.6 80.2L118.4 81.4Q118.2 82.4 117 82.2L114.8 81.8Q113.6 81.6 113.7 80.6Z" fill="#bcd8ee" stroke="#3a6ea6" stroke-width=".8"/>
<!-- keyboard -->
<rect x="120.4" y="70" width="44.2" height="16.6" rx="1" fill="#f2f4f6"/>
<rect x="121.4" y="71" width="42.2" height="14.6" fill="#1c2c52"/>
<g stroke="#cfd6e4" stroke-width=".45" opacity=".85"><path d="M121.4 74.2H163.6M121.4 77.4H163.6M121.4 80.6H163.6M121.4 83.4H163.6"/>
<path d="M124.4 71V83.4M127.4 71V83.4M130.4 71V83.4M133.4 71V83.4M136.4 71V83.4M139.4 71V83.4M142.4 71V83.4M145.4 71V83.4M148.4 71V83.4M151.4 71V83.4M154.4 71V83.4M157.4 71V83.4M160.4 71V83.4" stroke-width=".6"/>
<path d="M126 83.4V85.6M148 83.4V85.6M152 83.4V85.6M156 83.4V85.6M160 83.4V85.6"/></g>
<!-- calculator -->
<rect x="167" y="66" width="10" height="14.2" rx=".8" fill="#5a86a8"/><rect x="168" y="67" width="8" height="2.6" fill="#cfe4f2"/>
<rect x="168" y="70.6" width="2" height="1.6" fill="#d9e3ea"/><rect x="170.4" y="70.6" width="2" height="1.6" fill="#e0584e"/><rect x="172.8" y="70.6" width="3.2" height="1.6" fill="#2fc0c8"/>
<g fill="#dbe6ee"><rect x="168" y="73" width="1.6" height="1.5"/><rect x="170.2" y="73" width="1.6" height="1.5"/><rect x="172.4" y="73" width="1.6" height="1.5"/><rect x="174.6" y="73" width="1.6" height="1.5"/>
<rect x="172.4" y="75.2" width="1.6" height="1.5"/><rect x="174.6" y="75.2" width="1.6" height="1.5"/><rect x="172.4" y="77.4" width="1.6" height="1.5"/><rect x="174.6" y="77.4" width="1.6" height="1.5"/></g>
<g fill="#3f6c90"><rect x="168" y="75.2" width="1.6" height="1.5"/><rect x="170.2" y="75.2" width="1.6" height="1.5"/><rect x="168" y="77.4" width="1.6" height="1.5"/><rect x="170.2" y="77.4" width="1.6" height="1.5"/></g>
<!-- tablet -->
<g transform="rotate(-4 188.2 67.2)"><rect x="179.4" y="56.4" width="17.6" height="21.8" rx="1.2" fill="#4a2f2e"/><rect x="180.8" y="57.8" width="14.8" height="18.4" fill="#b5b5b5"/><path d="M180.8 57.8H195.6V76.2Z" fill="#c2c2c2"/><rect x="187.6" y="76.8" width="1.4" height=".9" fill="#4aa0d8"/></g>
<!-- phone -->
<g transform="rotate(13 188 87.8)"><rect x="183.6" y="80.6" width="8.8" height="14.4" rx="1.6" fill="#4a2f2e"/><rect x="184.6" y="82.4" width="6.8" height="10.2" fill="#b3b3b3"/><path d="M184.6 82.4H191.4V92.6Z" fill="#c4c4c4"/><rect x="187.2" y="93.4" width="1.6" height=".9" fill="#4aa0d8"/><rect x="187" y="81.2" width="2" height=".6" fill="#d05a4a"/></g>
<!-- mouse -->
<g transform="rotate(-10 172.5 88)"><rect x="169.4" y="82.6" width="6.4" height="11" rx="3.2" fill="#f3f4f6"/><rect x="171.6" y="84.2" width="1.6" height="2.4" rx=".7" fill="#4b5f7c"/></g>
<!-- coffee -->
<circle cx="143" cy="94.2" r="5.6" fill="#fbfbfa"/><circle cx="143" cy="94.2" r="4.4" fill="#f0eeea"/><circle cx="143" cy="94.2" r="2.9" fill="#8a3a14"/><circle cx="143.4" cy="93.8" r="1.5" fill="#a84c1c"/>
<!-- chair -->
<path d="M122.4 130.4L127 118H158L162.2 130.4Z" fill="#c6974f"/>
<rect x="126.8" y="104.4" width="5.2" height="8" fill="#8a5f26"/><rect x="152.6" y="104.4" width="5.4" height="8" fill="#8a5f26"/>
<rect x="132" y="104.4" width="20.6" height="2.6" fill="#1f4f86"/>
<!-- arms & body -->
<path d="M121.6 91.6C119.6 99 118.6 108 121 114.4C123.4 120.6 128.6 122.6 134 123" fill="none" stroke="#f01214" stroke-width="8.4" stroke-linecap="butt"/>
<path d="M163 90.6C165.4 98 166.4 108 164 114.4C161.6 120.6 156.4 122.6 151 123" fill="none" stroke="#f01214" stroke-width="8.4" stroke-linecap="butt"/>
<path d="M130.6 110Q130.6 106 134.6 106H149.6Q153.4 106 153.4 110L158 120V127H127V120Z" fill="#f01a1c"/>
<path d="M118.2 91.4l7.4 1.6-.4 1.4-7.4-1.6Z" fill="#fbe9e6"/><path d="M159.4 92.4l7.2-1.8.4 1.4-7.2 1.8Z" fill="#fbe9e6"/>
<!-- hands -->
<path d="M121.6 91.6Q121.2 86 123.6 83.6Q124 81.6 125.2 81.8L125.6 80.2Q126.6 79.6 127 80.6L127.8 80Q128.8 80 128.8 81L129.6 81Q130.6 81.4 130.2 82.6Q131.2 85 130.8 87Q130.4 90.4 127.6 92.8Z" fill="#f6b883"/>
<path d="M163.2 90.4Q164 85 161.2 82.6Q160.8 80.6 159.6 80.8L159.2 79.2Q158.2 78.6 157.8 79.6L157 79Q156 79 156 80L155.2 80Q154.2 80.4 154.6 81.6Q153.6 84 154 86Q154.6 89.4 157.4 91.8Z" fill="#f6b883"/>
<!-- collar & head -->
<path d="M131.4 117Q132.6 113.4 136.4 111.4L138.4 113.6Q134.4 116 133.2 119Z" fill="#f7ded6"/><path d="M153.6 117Q152.4 113.4 148.6 111.4L146.6 113.6Q150.6 116 151.8 119Z" fill="#f7ded6"/>
<ellipse cx="142.5" cy="122" rx="10.6" ry="11" fill="#5d4433"/>
<path d="M141 132.4h3l-.6 4.2h-1.8Z" fill="#4e382a"/>
<path d="M139 112.5Q137.8 122 139.6 132M142.5 111.2V133M146 112.5Q147.2 122 145.4 132" stroke="#6b513f" stroke-width=".6" fill="none"/>
<!-- credit -->
<text x="118" y="149.8" font-family="Liberation Sans" font-weight="bold" font-size="3.6" fill="#e9f5f5" textLength="21">designed by</text>
<circle cx="141.4" cy="148.4" r="1.7" fill="#f2fafa"/>
<text x="144.2" y="149.8" font-family="Liberation Sans" font-weight="bold" font-size="3.6" fill="#e9f5f5" textLength="17">freepik.com</text>
</g></g>
</svg>
<svg style="left:76px;top:160px" width="40" height="215" viewBox="76 160 40 215">
<defs><filter id="b3"><feGaussianBlur stdDeviation="0.3"/></filter>
<linearGradient id="gB" x1="0" y1="0" x2="1" y2="1"><stop offset="0" stop-color="#2aa0f6"/><stop offset="1" stop-color="#3d4ef0"/></linearGradient>
<linearGradient id="gG" x1="0" y1="0" x2="1" y2="1"><stop offset="0" stop-color="#8fe04a"/><stop offset="1" stop-color="#3fb848"/></linearGradient>
<linearGradient id="gR" x1="0" y1="0" x2="1" y2="1"><stop offset="0" stop-color="#f04a3a"/><stop offset="1" stop-color="#d82a2a"/></linearGradient></defs>
<path d="M86 165h4.2l-2.1 2.6Z" fill="#4a86cc"/>
<g filter="url(#b3)">
<!-- materiales -->
<rect x="82.3" y="189" width="6.6" height="6.4" rx="1.3" fill="url(#gG)" stroke="#b4d0f2" stroke-width="1.3"/>
<rect x="88.4" y="191" width="5.8" height="5.4" rx="1.3" fill="url(#gR)" stroke="#b4d0f2" stroke-width="1.3"/>
<rect x="84.8" y="194" width="8.4" height="7.4" rx="1.5" fill="url(#gB)" stroke="#b4d0f2" stroke-width="1.4"/>
<rect x="86" y="195.2" width="5" height="1.1" fill="#8fd4ff" opacity=".8"/>
<!-- actualizaciones -->
<rect x="81.6" y="213.6" width="13.4" height="13" rx=".8" fill="#dcdcdc"/>
<rect x="82.6" y="214.6" width="11.4" height="3" fill="#cfcfcf"/>
<rect x="82.6" y="221" width="5" height="4.8" fill="#c6c6c6"/><path d="M82.6 221H87.6V225.8" fill="none" stroke="#b4b4b4" stroke-width=".7"/>
<!-- libreta -->
<rect x="81.6" y="244.6" width="3" height="6.8" fill="#c8c8c8"/><rect x="85" y="240.6" width="3.4" height="10.8" fill="#bdbdbd"/><rect x="88.8" y="238.2" width="3" height="13.2" fill="#c4c4c4"/><rect x="92" y="241.8" width="3" height="9.6" fill="#d4d4d4"/>
<path d="M86 251L94.6 241.4" stroke="#efefef" stroke-width="1.8"/><path d="M86.8 251.6L95 242.6" stroke="#b0b0b0" stroke-width=".7"/>
<!-- config -->
<rect x="81.6" y="270" width="3" height="6.6" fill="#c8c8c8"/><rect x="85" y="266" width="3.2" height="10.6" fill="#bdbdbd"/><rect x="88.6" y="263.6" width="3" height="11" fill="#c4c4c4"/><rect x="91.8" y="266.4" width="2.6" height="6" fill="#d0d0d0"/>
<circle cx="91.8" cy="275" r="2.4" fill="#e8e8e8" stroke="#888" stroke-width="1.3"/>
<g stroke="#888" stroke-width="1"><path d="M91.8 271.2V272.4M91.8 277.6V278.8M88 275H89.2M94.4 275H95.6M89.1 272.3L90 273.2M93.6 276.8L94.5 277.7M89.1 277.7L90 276.8M93.6 273.2L94.5 272.3"/></g>
<!-- medallas -->
<path d="M88.5 301.8L90.7 306.6L96 307.2L92.1 310.8L93.2 316L88.5 313.4L83.8 316L84.9 310.8L81 307.2L86.3 306.6Z" fill="#c9c9c9" stroke="#b6b6b6" stroke-width="1.1" stroke-linejoin="round"/>
<!-- asistencia -->
<rect x="81.6" y="327" width="13.6" height="14.2" rx=".8" fill="#e4e4e4" stroke="#bdbdbd" stroke-width=".8"/>
<rect x="82.2" y="327.6" width="12.4" height="2.6" fill="#cfcfcf"/>
<g fill="#b8b8b8"><rect x="83.4" y="332" width="2" height="1.8"/><rect x="86.4" y="332" width="2" height="1.8"/><rect x="89.4" y="332" width="2" height="1.8"/><rect x="83.4" y="335" width="2" height="1.8"/><rect x="86.4" y="335" width="2" height="1.8"/><rect x="83.4" y="338" width="2" height="1.8"/></g>
<rect x="85.8" y="331.6" width="3.2" height="2.8" fill="#9a9a9a"/>
<path d="M86 340.4L93.4 332.6L94.8 334L87.4 341.6L85.6 342Z" fill="#bcbcbc" stroke="#9c9c9c" stroke-width=".6"/>
<!-- miembros -->
<path d="M81.6 366.2Q81.6 362 85.4 361L88.9 362.6L92.4 361Q96 362 96 366.2Z" fill="#cdcdcd" stroke="#b4b4b4" stroke-width=".7"/>
<ellipse cx="88.9" cy="356.6" rx="3.3" ry="3.9" fill="#dadada" stroke="#a8a8a8" stroke-width=".8"/>
<path d="M85.6 356Q85.4 352.4 88.9 352.2Q92.4 352.4 92.2 356Q90.8 354.4 88.9 354.6Q87 354.4 85.6 356Z" fill="#a0a0a0"/>
</g>
<path d="M199.9 194.5h5.4l-2.7 2.9Z" fill="#1a1a1a"/>
</svg>
<div class="t" style="left:98.3px;top:162px;font-size:9.30px;color:#5e5e5e;">Opciones del Curso</div>
<div class="t" style="left:100.3px;top:192px;font-size:10.27px;color:#333;letter-spacing:0.164px;-webkit-text-stroke:0.53px #333;">Materiales</div>
<div class="t" style="left:100.3px;top:216px;font-size:9.79px;color:#5e5e5e;">Actualizaciones</div>
<div class="t" style="left:100.3px;top:242px;font-size:9.93px;color:#5e5e5e;">Libreta de calificaciones</div>
<div class="t" style="left:100.3px;top:267px;font-size:9.90px;color:#5e5e5e;">Configuración de</div>
<div class="t" style="left:100.3px;top:280px;font-size:9.90px;color:#5e5e5e;">calificaciones</div>
<div class="t" style="left:100.3px;top:305px;font-size:9.90px;color:#5e5e5e;">Medallas</div>
<div class="t" style="left:100.3px;top:330px;font-size:9.90px;color:#5e5e5e;">Asistencia</div>
<div class="t" style="left:100.3px;top:355px;font-size:9.90px;color:#5e5e5e;">Miembros</div>
<div class="abs" style="left:77.5px;top:384px;width:125.5px;height:41.4px;background:#b6e5a7;"></div>
<div class="t" style="left:85.2px;top:393px;font-size:8.59px;color:#333;letter-spacing:0.222px;-webkit-text-stroke:0.45px #333;">Código de Acceso</div>
<div class="t" style="left:85.0px;top:407px;font-size:9.40px;color:#2e2e2e;letter-spacing:-0.52px;transform:scaleX(.9);transform-origin:0 0;">WRJGG-WV4JC</div>
<div class="t" style="left:151.6px;top:407px;font-size:8.15px;color:#3a86c4;">Restablecer</div>
<svg style="left:190px;top:392px" width="8" height="8" viewBox="190 392 8 8"><path d="M191.4 393.2L196.4 398.2M196.4 393.2L191.4 398.2" stroke="#a4d2c8" stroke-width="1.1"/></svg>
<div class="t" style="left:81.0px;top:437px;font-size:9.31px;color:#333;letter-spacing:0.303px;-webkit-text-stroke:0.48px #333;">Información</div>
<div class="abs" style="left:77px;top:450px;width:126px;height:1px;background:#d4dfea;"></div>
<div class="t" style="left:81.0px;top:456px;font-size:9.20px;color:#444;">Herramientas 2.0 para la</div>
<div class="t" style="left:81.0px;top:468px;font-size:9.20px;color:#444;">gestión y la docencia</div>
<div class="t" style="left:81.0px;top:480px;font-size:9.20px;color:#444;">universitaria.</div>
<div class="t" style="left:81.0px;top:496px;font-size:9.20px;color:#5a6f8a;">Ubicación</div>
<div class="t" style="left:81.0px;top:508px;font-size:9.20px;color:#444;">UNIR</div>
</body>
</html>
